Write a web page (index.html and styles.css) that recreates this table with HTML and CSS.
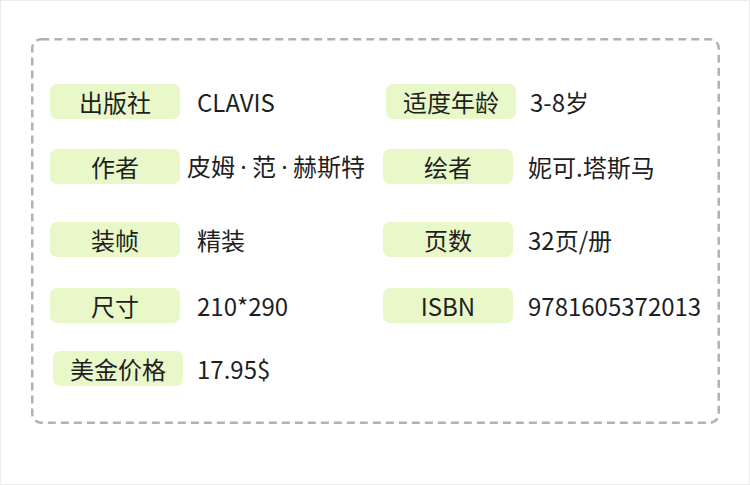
FILE: index.html
```html
<!DOCTYPE html>
<html lang="zh-CN">
<head>
<meta charset="utf-8">
<link rel="stylesheet" href="styles.css">
</head>
<body>
<div class="page">
  <div class="card">
    <svg class="frame" width="689" height="386" viewBox="0 0 689 386" aria-hidden="true">
      <rect x="1.25" y="1.25" width="686.5" height="383.5" rx="9" ry="9" fill="none" stroke="#b2b2b2" stroke-width="2.5" stroke-dasharray="8 5"/>
    </svg>
    <div class="grid">
      <div class="item"><span class="label">出版社</span><span class="value">CLAVIS</span></div>
      <div class="item item-right shift"><span class="label">适度年龄</span><span class="value">3-8岁</span></div>
      <div class="item"><span class="label">作者</span><span class="value tight">皮姆<span class="dot">·</span>范<span class="dot">·</span>赫斯特</span></div>
      <div class="item item-right"><span class="label">绘者</span><span class="value">妮可.塔斯马</span></div>
      <div class="item"><span class="label">装帧</span><span class="value">精装</span></div>
      <div class="item item-right"><span class="label">页数</span><span class="value">32页/册</span></div>
      <div class="item"><span class="label">尺寸</span><span class="value">210*290</span></div>
      <div class="item item-right"><span class="label">ISBN</span><span class="value">9781605372013</span></div>
      <div class="item shift"><span class="label">美金价格</span><span class="value">17.95$</span></div>
    </div>
  </div>
</div>
</body>
</html>
```

FILE: styles.css
```css
* { box-sizing: border-box; }
html, body { margin: 0; padding: 0; background: #fff; }
body {
  font-family: "Noto Sans CJK SC", "Noto Sans", sans-serif;
  color: #1f1f1f;
}
.page {
  width: 750px;
  height: 485px;
  border: 1px solid #ececec;
  padding: 37px 30px 0 30px;
}
.card {
  position: relative;
  width: 689px;
  height: 386px;
  padding: 46px 0 0 19px;
}
.frame {
  position: absolute;
  left: 0;
  top: 0;
}
.grid {
  position: relative;
  display: grid;
  grid-template-columns: 333px 1fr;
  grid-template-rows: 65px 73px 66px 63px 35px;
  align-items: start;
}
.item {
  display: flex;
  align-items: center;
  height: 35px;
}
.item.shift { margin-left: 3px; }
.label {
  width: 130px;
  height: 35px;
  border-radius: 7px;
  background: #e9f8c9;
  display: flex;
  align-items: center;
  justify-content: center;
  font-size: 24px;
  line-height: 1;
}
.value {
  margin-left: 17px;
  font-size: 24px;
  line-height: 1;
  white-space: nowrap;
}
.value.tight { margin-left: 7px; }
.dot {
  display: inline-block;
  width: 17px;
  text-align: center;
  font-family: "Noto Sans", sans-serif;
}
.item-right .value { margin-left: 15px; }
.item.shift .value { margin-left: 14px; }
```
